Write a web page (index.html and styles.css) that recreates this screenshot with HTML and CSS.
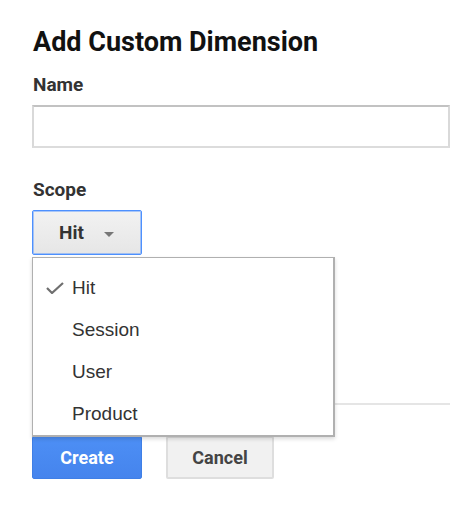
FILE: index.html
```html
<!DOCTYPE html>
<html lang="en">
<head>
<meta charset="utf-8">
<title>Add Custom Dimension</title>
<link rel="stylesheet" href="styles.css">
</head>
<body>
<div class="page">
  <h1 class="title">Add Custom Dimension</h1>
  <div class="field">
    <div class="label">Name</div>
    <div class="input"></div>
  </div>
  <div class="field scope">
    <div class="label">Scope</div>
    <div class="select-wrap">
      <button class="select">Hit <span class="caret"></span></button>
      <ul class="menu">
        <li class="item selected"><svg class="check" width="18" height="12" viewBox="0 0 18 12"><polyline points="1,6 6,11 17,1" fill="none" stroke="#6f6f6f" stroke-width="2.2"/></svg>Hit</li>
        <li class="item">Session</li>
        <li class="item">User</li>
        <li class="item">Product</li>
      </ul>
    </div>
  </div>
  <div class="sep"></div>
  <div class="actions">
    <button class="btn btn-primary">Create</button>
    <button class="btn btn-default">Cancel</button>
  </div>
</div>
</body>
</html>
```
FILE: styles.css
```css
html, body {
  margin: 0;
  padding: 0;
  background: #fff;
}
.page {
  width: 418px;
  padding: 0 0 0 32px;
  font-family: Roboto, "Liberation Sans", sans-serif;
}
.title {
  margin: 0;
  padding-top: 27px;
  font-size: 27px;
  line-height: 30px;
  font-weight: 700;
  color: #111;
  padding-left: 1px;
}
.field {
  display: flex;
  flex-direction: column;
}
.label {
  font-size: 19px;
  font-weight: 700;
  color: #333;
  line-height: 22px;
  padding-left: 1px;
}
.field .label {
  margin-top: 17px;
}
.input {
  margin-top: 9px;
  height: 39px;
  border: 2px solid #d9d9d9;
  border-top-color: #c2c2c2;
  border-bottom-color: #dcdcdc;
}
.scope .label {
  margin-top: 31px;
}
.select-wrap {
  position: relative;
  margin-top: 9px;
  width: 110px;
}
.select {
  display: flex;
  align-items: center;
  width: 110px;
  height: 45px;
  box-sizing: border-box;
  margin: 0;
  padding: 0 0 0 26px;
  border: 1px solid #4d90fe;
  border-radius: 2px;
  box-shadow: inset 0 0 0 1px rgba(77, 144, 254, 0.45);
  background: linear-gradient(#f2f2f2, #e6e6e6);
  font-family: Roboto, "Liberation Sans", sans-serif;
  font-size: 19px;
  font-weight: 700;
  color: #333;
}
.caret {
  margin-left: 20px;
  width: 0;
  height: 0;
  border-left: 5px solid transparent;
  border-right: 5px solid transparent;
  border-top: 5px solid #777;
  margin-top: 3px;
}
.menu {
  position: absolute;
  left: 0;
  top: 47px;
  width: 303px;
  box-sizing: border-box;
  margin: 0;
  padding: 9px 0 0 0;
  list-style: none;
  background: #fff;
  border: 1px solid #b0b0b0;
  border-width: 1px 2px 2px 1px;
  box-shadow: 0 2px 4px rgba(0, 0, 0, 0.15);
  z-index: 2;
}
.item {
  position: relative;
  height: 42px;
  line-height: 42px;
  padding-left: 39px;
  font-family: "Liberation Sans", Arial, sans-serif;
  font-size: 19px;
  color: #333;
}
.check {
  position: absolute;
  left: 13px;
  top: 15px;
}
.sep {
  margin-top: 148px;
  height: 2px;
  background: #e5e5e5;
}
.actions {
  display: flex;
  gap: 24px;
  margin-top: 31px;
}
.btn {
  height: 43px;
  box-sizing: border-box;
  margin: 0;
  border-radius: 2px;
  font-family: Roboto, "Liberation Sans", sans-serif;
  font-size: 18px;
  font-weight: 700;
  padding: 0;
}
.btn-primary {
  width: 110px;
  background: linear-gradient(#4d8ff5, #4584ed);
  border: 1px solid #3f7fe6;
  color: #fff;
}
.btn-default {
  width: 108px;
  background: #f1f1f1;
  border: 2px solid #dedede;
  color: #444;
}
```
